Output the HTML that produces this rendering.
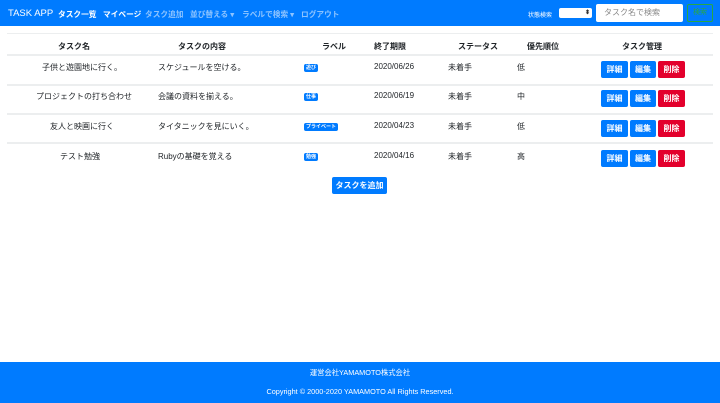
<!DOCTYPE html><html><head><meta charset="utf-8"><style>
*{box-sizing:border-box;margin:0;padding:0}
body{width:720px;height:403px;position:relative;font-family:"Liberation Sans","Noto Sans CJK JP",sans-serif;font-size:8px;color:#212529;background:#fff;overflow:hidden}
.nav{position:absolute;left:0;top:0;width:720px;height:26px;background:#007bff;color:#fff;font-weight:bold;font-size:7.7px}
.nav span{position:absolute;top:9px;white-space:nowrap}
.dim{color:rgba(255,255,255,.55)}
.a{position:absolute;white-space:nowrap}
.th{font-weight:bold;top:41px}
.line{position:absolute;left:7px;width:706px;height:2px;background:#eceeef}
.btn{position:absolute;height:17px;border-radius:2px;color:#fff;text-align:center;line-height:17px;font-size:8px;font-weight:bold}
.b{background:#007bff}.r{background:#e3002c}
.badge{position:absolute;background:#007bff;color:#fff;font-size:5px;font-weight:bold;padding:1px 2px;border-radius:2px;line-height:6px}
.foot{position:absolute;left:0;top:362px;width:720px;height:41px;background:#007bff;color:#fff;text-align:center;font-size:7.3px}
</style></head><body>
<div class="nav">
<span style="left:8px;font-size:9.5px;top:8px;font-weight:normal">TASK APP</span>
<span style="left:58px">タスク一覧</span>
<span style="left:103px">マイページ</span>
<span class="dim" style="left:145px">タスク追加</span>
<span class="dim" style="left:190px">並び替える ▾</span>
<span class="dim" style="left:242px">ラベルで検索 ▾</span>
<span class="dim" style="left:301px">ログアウト</span>
<span style="left:528px;top:10px;font-size:6px;font-weight:normal">状態検索</span>
<div style="position:absolute;left:559px;top:8px;width:33px;height:10px;background:#fff;border-radius:2px;font-size:6px;color:#333;text-align:right;padding-right:2px;line-height:10px">⬍</div>
<div style="position:absolute;left:596px;top:4px;width:87px;height:18px;background:#fff;border-radius:2px;color:#888;padding-left:8px;line-height:18px;font-weight:normal;font-size:8px">タスク名で検索</div>
<div style="position:absolute;left:687px;top:4px;width:26px;height:18px;border:1px solid #28a745;border-radius:2px;color:#28a745;text-align:center;line-height:16px;font-size:7px;font-weight:normal">検索</div>
</div>
<div class="line" style="top:33px;height:1px"></div>
<span class="a th" style="left:58px">タスク名</span>
<span class="a th" style="left:178px">タスクの内容</span>
<span class="a th" style="left:322px">ラベル</span>
<span class="a th" style="left:374px">終了期限</span>
<span class="a th" style="left:458px">ステータス</span>
<span class="a th" style="left:527px">優先順位</span>
<span class="a th" style="left:622px">タスク管理</span>
<div class="line" style="top:54px"></div>
<div class="line" style="top:84px"></div>
<div class="line" style="top:113px"></div>
<div class="line" style="top:142px"></div>

<span class="a" style="left:42px;top:62px">子供と遊園地に行く。</span>
<span class="a" style="left:158px;top:62px">スケジュールを空ける。</span>
<span class="badge" style="left:304px;top:64px">遊び</span>
<span class="a" style="left:374px;top:62px">2020/06/26</span>
<span class="a" style="left:448px;top:62px">未着手</span>
<span class="a" style="left:517px;top:62px">低</span>

<span class="a" style="left:36px;top:91px">プロジェクトの打ち合わせ</span>
<span class="a" style="left:158px;top:91px">会議の資料を揃える。</span>
<span class="badge" style="left:304px;top:93px">仕事</span>
<span class="a" style="left:374px;top:91px">2020/06/19</span>
<span class="a" style="left:448px;top:91px">未着手</span>
<span class="a" style="left:517px;top:91px">中</span>

<span class="a" style="left:50px;top:121px">友人と映画に行く</span>
<span class="a" style="left:158px;top:121px">タイタニックを見にいく。</span>
<span class="badge" style="left:304px;top:123px">プライベート</span>
<span class="a" style="left:374px;top:121px">2020/04/23</span>
<span class="a" style="left:448px;top:121px">未着手</span>
<span class="a" style="left:517px;top:121px">低</span>

<span class="a" style="left:60px;top:151px">テスト勉強</span>
<span class="a" style="left:158px;top:151px">Rubyの基礎を覚える</span>
<span class="badge" style="left:304px;top:153px">勉強</span>
<span class="a" style="left:374px;top:151px">2020/04/16</span>
<span class="a" style="left:448px;top:151px">未着手</span>
<span class="a" style="left:517px;top:151px">高</span>

<div class="btn b" style="left:601px;top:61px;width:27px">詳細</div><div class="btn b" style="left:630px;top:61px;width:26px">編集</div><div class="btn r" style="left:658px;top:61px;width:27px">削除</div>
<div class="btn b" style="left:601px;top:90px;width:27px">詳細</div><div class="btn b" style="left:630px;top:90px;width:26px">編集</div><div class="btn r" style="left:658px;top:90px;width:27px">削除</div>
<div class="btn b" style="left:601px;top:120px;width:27px">詳細</div><div class="btn b" style="left:630px;top:120px;width:26px">編集</div><div class="btn r" style="left:658px;top:120px;width:27px">削除</div>
<div class="btn b" style="left:601px;top:150px;width:27px">詳細</div><div class="btn b" style="left:630px;top:150px;width:26px">編集</div><div class="btn r" style="left:658px;top:150px;width:27px">削除</div>

<div class="btn b" style="left:332px;top:177px;width:55px;height:17px">タスクを追加</div>

<div class="foot">
<div style="position:absolute;top:6px;width:100%">運営会社YAMAMOTO株式会社</div>
<div style="position:absolute;top:25px;width:100%">Copyright © 2000-2020 YAMAMOTO All Rights Reserved.</div>
</div>
</body></html>
